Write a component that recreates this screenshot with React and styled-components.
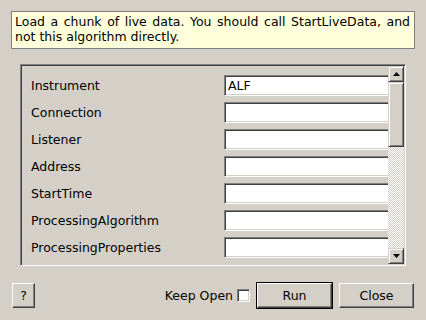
import React from "react";
import styled, { createGlobalStyle } from "styled-components";

const Global = createGlobalStyle`
  html, body { margin: 0; padding: 0; background: #d4d0c8; }
  body { font-family: "DejaVu Sans", "Liberation Sans", sans-serif; font-size: 12.5px; color: #000; }
  * { box-sizing: border-box; }
`;

const Page = styled.div`
  width: 426px;
  height: 320px;
  display: flex;
  flex-direction: column;
  padding: 11px 0 12px;
`;

const Description = styled.div`
  margin: 0 11px;
  height: 38px;
  background: #ffffdc;
  border: 1px solid #808080;
  padding: 2px 4px 0 3px;
  line-height: 15px;
  text-align: justify;
`;

const Frame = styled.div`
  margin: 15px 20px 0;
  height: 202px;
  display: flex;
  border: 1px solid;
  border-color: #808080 #fff #fff #808080;
  box-shadow: inset 1px 1px #404040, inset -1px -1px #d4d0c8;
  padding: 1px;
`;

const Viewport = styled.div`
  flex: 1;
  overflow: hidden;
  padding: 9px 0 0 9px;
  display: flex;
  flex-direction: column;
  gap: 6px;
`;

const Row = styled.div`
  display: flex;
  align-items: center;
  height: 21px;
`;

const Label = styled.div`
  width: 193px;
  flex: none;
  white-space: nowrap;
`;

const Input = styled.div`
  flex: none;
  width: 180px;
  height: 21px;
  background: #fff;
  border: 1px solid;
  border-color: #808080 #fff #fff #808080;
  box-shadow: inset 1px 1px #404040, inset -1px -1px #d4d0c8;
  padding: 1px 3px 0 3px;
  line-height: 18px;
`;

const ScrollBar = styled.div`
  width: 16px;
  flex: none;
  display: flex;
  flex-direction: column;
`;

const Raised = styled.div`
  background: #d4d0c8;
  border: 1px solid;
  border-color: #d4d0c8 #404040 #404040 #d4d0c8;
  box-shadow: inset 1px 1px #fff, inset -1px -1px #808080;
`;

const ArrowButton = styled(Raised)`
  height: 16px;
  flex: none;
  display: flex;
  align-items: center;
  justify-content: center;
`;

const Thumb = styled(Raised)`
  height: 65px;
  flex: none;
`;

const Track = styled.div`
  flex: 1;
  background-color: #d4d0c8;
  background-image: repeating-conic-gradient(#fff 0% 25%, #d4d0c8 0% 50%);
  background-size: 2px 2px;
`;

const Footer = styled.div`
  margin: 16px 12px 0;
  height: 26px;
  display: flex;
  align-items: center;
`;

const Button = styled.button`
  font: inherit;
  color: #000;
  background: #d4d0c8;
  width: ${(p) => p.$w}px;
  height: 25px;
  padding: 0;
  border: 1px solid;
  border-color: #fff #404040 #404040 #fff;
  box-shadow: inset -1px -1px #808080;
  outline: ${(p) => (p.$default ? "1px solid #000" : "none")};
  margin: 0 ${(p) => (p.$default ? 1 : 0)}px 0 ${(p) => (p.$default ? 1 : p.$ml || 0)}px;
`;

const Spacer = styled.div`
  flex: 1;
`;

const KeepLabel = styled.span`
  margin-right: 4px;
`;

const Check = styled.div`
  width: 13px;
  height: 13px;
  background: #fff;
  border: 1px solid;
  border-color: #808080 #fff #fff #808080;
  box-shadow: inset 1px 1px #404040, inset -1px -1px #d4d0c8;
  margin-right: 6px;
`;

const Arrow = ({ down }) => (
  <svg width="7" height="4" viewBox="0 0 7 4">
    <polygon points={down ? "0,0 7,0 3.5,4" : "3.5,0 7,4 0,4"} fill="#000" />
  </svg>
);

const props = [
  ["Instrument", "ALF"],
  ["Connection", ""],
  ["Listener", ""],
  ["Address", ""],
  ["StartTime", ""],
  ["ProcessingAlgorithm", ""],
  ["ProcessingProperties", ""],
];

export default function App() {
  return (
    <>
      <Global />
      <Page>
        <Description>
          Load a chunk of live data. You should call StartLiveData, and not this algorithm directly.
        </Description>
        <Frame>
          <Viewport>
            {props.map(([name, value]) => (
              <Row key={name}>
                <Label>{name}</Label>
                <Input>{value}</Input>
              </Row>
            ))}
          </Viewport>
          <ScrollBar>
            <ArrowButton><Arrow /></ArrowButton>
            <Thumb />
            <Track />
            <ArrowButton><Arrow down /></ArrowButton>
          </ScrollBar>
        </Frame>
        <Footer>
          <Button $w={23}>?</Button>
          <Spacer />
          <KeepLabel>Keep Open</KeepLabel>
          <Check />
          <Button $w={75} $default>Run</Button>
          <Button $w={75} $ml={6}>Close</Button>
        </Footer>
      </Page>
    </>
  );
}
